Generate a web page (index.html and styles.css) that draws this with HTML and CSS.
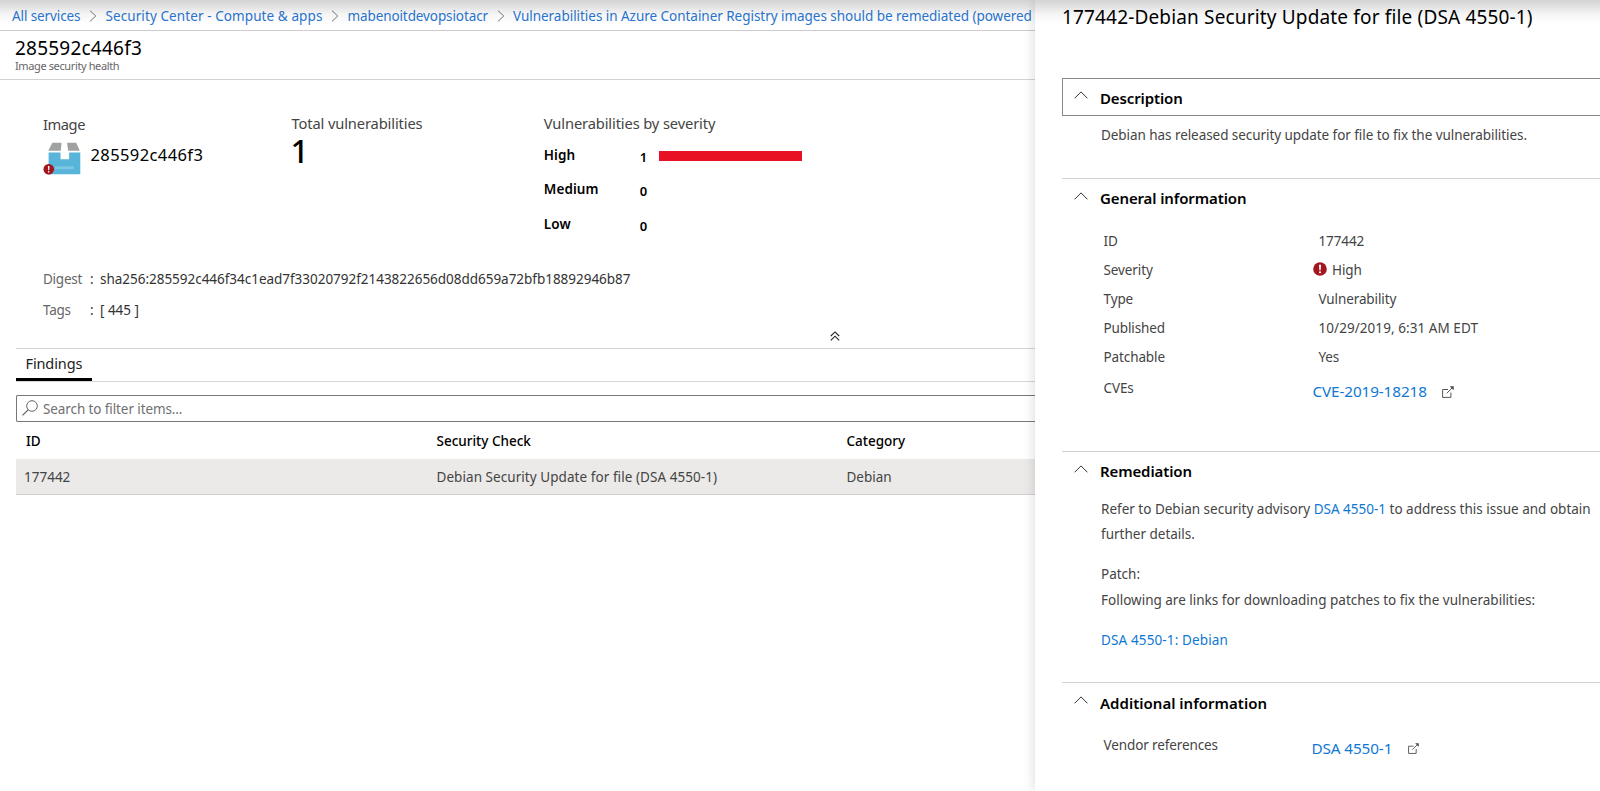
FILE: index.html
```html
<!DOCTYPE html>
<html lang="en">
<head>
<meta charset="utf-8">
<title>285592c446f3 - Image security health</title>
<link rel="stylesheet" href="styles.css">
</head>
<body>
<svg class="defs" width="0" height="0">
  <symbol id="chev-right" viewBox="0 0 8 12"><path d="M1 .7 6.8 6 1 11.3" fill="none" stroke="#767676"/></symbol>
  <symbol id="chev-up" viewBox="0 0 14 8"><path d="M.6 7.3 7 .9l6.400 6.400" fill="none" stroke="#333"/></symbol>
  <symbol id="alert" viewBox="0 0 14 14"><circle cx="7" cy="7" r="6.800" fill="#a4161f"/><path d="M6 2.800h2l-.35 5.400h-1.300z" fill="#fff"/><circle cx="7" cy="10.200" r="1.050" fill="#fff"/></symbol>
  <symbol id="external" viewBox="0 0 12 12"><path d="M6 3.500H.6v7.900h8.300V6.500M4.800 7.300 10.500 1.500" fill="none" stroke="#555"/><path d="M7.800.3h3.900v3.900z" fill="#444"/></symbol>
</svg>
<div class="app">
  <main class="blade">
    <nav class="crumbs">
      <a class="crumb">All services</a><svg class="sep"><use href="#chev-right"/></svg>
      <a class="crumb wide">Security Center - Compute &amp; apps</a><svg class="sep"><use href="#chev-right"/></svg>
      <a class="crumb">mabenoitdevopsiotacr</a><svg class="sep"><use href="#chev-right"/></svg>
      <a class="crumb long">Vulnerabilities in Azure Container Registry images should be remediated (powered</a>
    </nav>
    <header class="blade-head">
      <h1 class="blade-title">285592c446f3</h1>
      <p class="blade-sub">Image security health</p>
    </header>
    <section class="summary">
      <div class="image-col">
        <h2 class="label">Image</h2>
        <div class="image-row">
          <svg class="package" viewBox="0 0 38 34">
            <path d="M9.300.8h9.200l-.7 8H5.300z" fill="#a0a1a2"/><path d="M24 .8h9.200l3.600 8H25.200z" fill="#a0a1a2"/>
            <path d="M5.600 10.600h11.900v6.600h8.600v-6.600h11.200v21.600H5.600z" fill="#59b4d9"/><path d="M12 24.400h18.800v2.800H12z" fill="#7ec8e3"/>
            <use href="#alert" x=".2" y="21.800" width="11" height="11"/>
          </svg>
          <span class="image-name">285592c446f3</span>
        </div>
      </div>
      <div class="total-col">
        <h2 class="label">Total vulnerabilities</h2>
        <p class="total">1</p>
      </div>
      <div class="severity-col">
        <h2 class="label">Vulnerabilities by severity</h2>
        <div class="sev"><b class="sev-name">High</b><b class="sev-count">1</b><i class="sev-bar"></i></div>
        <div class="sev"><b class="sev-name">Medium</b><b class="sev-count">0</b></div>
        <div class="sev"><b class="sev-name">Low</b><b class="sev-count">0</b></div>
      </div>
    </section>
    <dl class="meta">
      <dt>Digest</dt><dd class="colon">:</dd><dd>sha256:285592c446f34c1ead7f33020792f2143822656d08dd659a72bfb18892946b87</dd>
      <dt>Tags</dt><dd class="colon">:</dd><dd>[ 445 ]</dd>
    </dl>
    <div class="collapse"><svg class="collapse-icon" viewBox="0 0 10 10"><path d="M.8 5 5 .9 9.200 5M.8 9.300 5 5.200 9.200 9.300" fill="none" stroke="#222" stroke-width="1.100"/></svg></div>
    <div class="tabs"><span class="tab">Findings</span></div>
    <div class="search">
      <svg class="search-icon" viewBox="0 0 16 16"><circle cx="10" cy="6" r="5.300" fill="none" stroke="#666"/><path d="M6.200 9.800.5 15.400" stroke="#666" stroke-width="1.200"/></svg>
      <span>Search to filter items...</span>
    </div>
    <div class="table">
      <div class="row head"><span class="c1">ID</span><span>Security Check</span><span>Category</span></div>
      <div class="row body"><span class="c1">177442</span><span class="check">Debian Security Update for file (DSA 4550-1)</span><span>Debian</span></div>
    </div>
  </main>
  <aside class="panel">
    <h1 class="panel-title">177442-Debian Security Update for file (DSA 4550-1)</h1>
    <section class="group description">
      <h2 class="group-head boxed"><svg class="chev"><use href="#chev-up"/></svg>Description</h2>
      <p class="text">Debian has released security update for file to fix the vulnerabilities.</p>
    </section>
    <section class="group general">
      <h2 class="group-head"><svg class="chev"><use href="#chev-up"/></svg>General information</h2>
      <dl class="facts">
        <dt>ID</dt><dd>177442</dd>
        <dt>Severity</dt><dd class="with-icon"><svg class="alert"><use href="#alert"/></svg>High</dd>
        <dt>Type</dt><dd>Vulnerability</dd>
        <dt>Published</dt><dd class="date">10/29/2019, 6:31 AM EDT</dd>
        <dt>Patchable</dt><dd>Yes</dd>
        <dt class="low">CVEs</dt><dd class="ref"><a>CVE-2019-18218</a><svg class="ext"><use href="#external"/></svg></dd>
      </dl>
    </section>
    <section class="group remediation">
      <h2 class="group-head"><svg class="chev"><use href="#chev-up"/></svg>Remediation</h2>
      <div class="text">
        <p>Refer to Debian security advisory <a>DSA 4550-1</a> to address this issue and obtain<br>further details.</p>
        <p>Patch:<br>Following are links for downloading patches to fix the vulnerabilities:</p>
        <p><a class="patch">DSA 4550-1: Debian</a></p>
      </div>
    </section>
    <section class="group additional">
      <h2 class="group-head last"><svg class="chev"><use href="#chev-up"/></svg>Additional information</h2>
      <dl class="facts"><dt>Vendor references</dt><dd class="ref vendor"><a>DSA 4550-1</a><svg class="ext"><use href="#external"/></svg></dd></dl>
    </section>
  </aside>
  <div class="top-shade"></div>
</div>
</body>
</html>
```
FILE: styles.css
```css
* { box-sizing: border-box; margin: 0; padding: 0; }
body { background: #fff; color: #000; font: 13.500px/20px "Noto Sans", "Open Sans", sans-serif; }
h1, h2 { font-weight: 400; }
a { color: #0f78d4; text-decoration: none; }
svg { display: block; flex: none; }
.defs { position: absolute; }
.app { position: relative; display: flex; width: 1600px; height: 791px; overflow: hidden; }
.top-shade { position: absolute; inset: 0 0 auto; height: 24px; background: linear-gradient(rgba(0,0,0,.17), rgba(0,0,0,.14) 15%, rgba(0,0,0,.04) 60%, transparent); pointer-events: none; }

.blade { width: 1035px; flex: none; white-space: nowrap; overflow: hidden; }
.crumbs { display: flex; align-items: center; height: 31px; padding: 2px 0 0 12px; border-bottom: 1px solid #ccc; }
.crumb { color: #2a76d2; letter-spacing: -.1px; }
.crumb.wide { letter-spacing: .09px; }
.crumb.long { letter-spacing: -.035px; }
.sep { width: 8px; height: 12px; margin: 0 8.500px; }
.blade-head { height: 49px; padding: 7px 0 0 15px; border-bottom: 1px solid #d2d2d2; }
.blade-title { font-size: 19px; line-height: 20px; letter-spacing: .22px; }
.blade-sub { font-size: 11px; line-height: 16px; letter-spacing: -.38px; color: #666; }

.summary { display: grid; grid-template-columns: 248.500px 252.300px 1fr; height: 184px; padding: 35px 0 0 43px; }
.label { font-size: 14.700px; line-height: 20px; letter-spacing: -.13px; color: #444; margin-top: -2px; }
.image-col .label { margin-top: -1px; letter-spacing: -.45px; }
.image-row { display: flex; margin-top: 8px; }
.package { width: 38px; height: 34px; }
.image-name { margin: 3px 0 0 9.500px; font-size: 16.500px; letter-spacing: .4px; }
.total { font-size: 32px; line-height: 34px; margin: 1px 0 0 -1px; font-weight: 500; }
.sev { display: flex; height: 34.300px; }
.severity-col .label { margin-bottom: 12px; }
.sev-name { width: 96px; font-weight: 600; letter-spacing: .08px; }
.sev-count { width: 19px; margin-top: 2px; font-weight: 600; font-size: 13px; }
.sev-bar { width: 143px; height: 10px; margin-top: 6px; background: #e81123; }

.meta { display: grid; grid-template-columns: 47px 10px 1fr; grid-auto-rows: 31px; padding: 5px 0 0 43px; }
.meta dt { color: #666; letter-spacing: -.25px; }
.meta dd { color: #333; letter-spacing: -.025px; }
.collapse { height: 17px; padding-left: 830px; }
.collapse-icon { width: 10px; height: 10px; }
.tabs { height: 34px; margin-left: 16px; border: solid #d6d6d6; border-width: 1px 0; }
.tab { display: block; width: 76px; height: 32px; padding: 4px 9.500px; border-bottom: 3px solid #000; font-size: 14.500px; letter-spacing: -.12px; color: #222; }
.search { display: flex; align-items: center; gap: 5px; height: 27px; margin: 13px 0 0 16px; padding-left: 5px; border: 1px solid #777; border-right: 0; border-radius: 2px 0 0 2px; color: #707070; letter-spacing: -.1px; }
.search-icon { width: 16px; height: 16px; margin-top: -2px; }
.table { margin-left: 16px; }
.row { display: grid; grid-template-columns: 420.500px 410px 1fr; align-items: center; }
.head { height: 37px; padding-top: 1px; font-weight: 500; }
.head .c1 { padding-left: 10px; }
.body { height: 36px; padding-top: 1px; background: #ebeae8; border-bottom: 1px solid #cfcfcf; color: #444; }
.body .c1 { padding-left: 8px; }
.check { letter-spacing: .06px; }

.panel { flex: 1; padding-left: 27px; background: #fff; box-shadow: 0 0 12px rgba(0,0,0,.16); white-space: nowrap; color: #444; }
.panel-title { height: 78px; padding-top: 6px; font-size: 19px; line-height: 22px; letter-spacing: .16px; color: #000; }
.group-head { display: flex; align-items: center; height: 38px; padding: 0 0 0 12px; font-size: 15px; font-weight: 600; letter-spacing: -.12px; color: #000; }
.group-head.last { padding-top: 1px; letter-spacing: .015px; }
.chev { width: 14px; height: 8px; margin: -5px 12px 0 0; }
.group { border-top: 1px solid #d0d0d0; }
.description { height: 100px; border-top: 0; }
.group-head.boxed { border: 1px solid #888; border-right: 0; padding: 1px 0 0 11px; }
.general { height: 273px; }
.remediation { height: 231px; }
.text { padding-left: 39px; }
.description .text { margin-top: 9px; letter-spacing: -.062px; }
.remediation .text { margin-top: 6.500px; line-height: 25.500px; letter-spacing: 0; }
.remediation p { margin-bottom: 14.500px; }
.patch { letter-spacing: .13px; }
.facts { display: grid; grid-template-columns: 215px 1fr; grid-auto-rows: 29.100px; padding: 14px 0 0 41.500px; letter-spacing: -.11px; }
.date { letter-spacing: .06px; }
.with-icon { display: flex; margin-left: -6px; }
.alert { width: 14px; height: 14px; margin: 2px 5.500px 0 0; }
.low { padding-top: 2px; }
.ref { display: flex; margin-left: -6px; padding-top: 5px; font-size: 15.300px; letter-spacing: -.12px; }
.vendor { padding-top: 3px; margin-left: -7px; }
.ext { width: 12px; height: 12px; margin: 5px 0 0 15px; }
.vendor .ext { width: 11px; height: 11px; margin-left: 16px; }
```
